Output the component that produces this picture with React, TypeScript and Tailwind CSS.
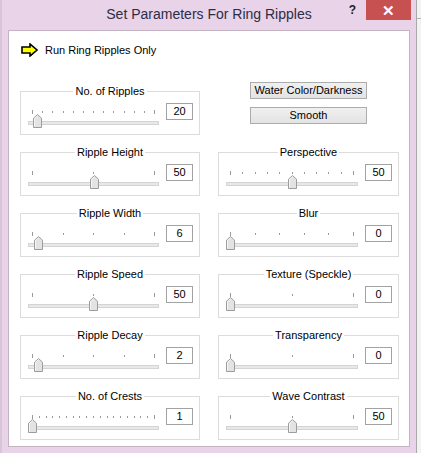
import React from 'react';

type SliderDef = {
  label: string;
  value: number;
  ticks: number;
  thumb: number; // thumb centre, px from the track's left end
};

const leftSliders: SliderDef[] = [
  { label: 'No. of Ripples', value: 20, ticks: 13, thumb: 9.5 },
  { label: 'Ripple Height', value: 50, ticks: 3, thumb: 66 },
  { label: 'Ripple Width', value: 6, ticks: 5, thumb: 10 },
  { label: 'Ripple Speed', value: 50, ticks: 3, thumb: 65.5 },
  { label: 'Ripple Decay', value: 2, ticks: 5, thumb: 10 },
  { label: 'No. of Crests', value: 1, ticks: 19, thumb: 4.5 },
];

const rightSliders: SliderDef[] = [
  { label: 'Perspective', value: 50, ticks: 11, thumb: 66 },
  { label: 'Blur', value: 0, ticks: 6, thumb: 4.5 },
  { label: 'Texture (Speckle)', value: 0, ticks: 3, thumb: 4.5 },
  { label: 'Transparency', value: 0, ticks: 3, thumb: 4.5 },
  { label: 'Wave Contrast', value: 50, ticks: 3, thumb: 66 },
];

const ArrowIcon = () => (
  <svg width="18" height="14" viewBox="0 0 18 14">
    <polygon points="2,5 10,5 10,2 16,7.5 10,13 10,10 2,10" fill="#333" />
    <polygon points="1,4 9,4 9,1 16,7 9,13 9,10 1,10" fill="#ffff00" stroke="#000" strokeWidth="1.6" strokeLinejoin="miter" />
  </svg>
);

const Thumb = () => (
  <svg width="9" height="14" viewBox="0 0 9 14">
    <polygon points="0.5,13.5 0.5,4.2 4.5,0.5 8.5,4.2 8.5,13.5" fill="#e3e3e3" stroke="#9c9c9c" strokeWidth="1" />
    <polyline points="1.5,12.5 1.5,4.6 4.5,1.8" fill="none" stroke="#f7f7f7" strokeWidth="1" />
  </svg>
);

const SliderGroup = ({ s }: { s: SliderDef }) => (
  <div className="flex h-[44px] flex-col border border-[#dcdcdc]">
    <div className="mx-auto -mt-[7px] bg-white px-[2px] text-[11px] leading-[13px] text-black">
      {s.label}
    </div>
    <div className="mt-[5px] flex items-start pl-[7px] pr-[6px]">
      <div className="relative h-[25px] flex-1">
        {Array.from({ length: s.ticks }, (_, i) => {
          const end = i === 0 || i === s.ticks - 1;
          return (
            <div
              key={i}
              className={`absolute w-px bg-[#9a9a9a] ${end ? 'top-[7px] h-[4px]' : 'top-[8px] h-[2px]'}`}
              style={{ left: `calc(4px + (100% - 9px) * ${i / (s.ticks - 1)})` }}
            />
          );
        })}
        <div className="mt-[18px] h-[4px] border border-[#d4d4d4] bg-[#e7e9e9]" />
        <div className="absolute top-[11px] flex" style={{ left: `${s.thumb - 4.5}px` }}>
          <Thumb />
        </div>
      </div>
      <div className="ml-[7px] flex h-[17px] w-[27px] items-center justify-center border border-[#a2a2a2] bg-white text-[11px] leading-none text-black">
        {s.value}
      </div>
    </div>
  </div>
);

const WinButton = ({ children }: { children: React.ReactNode }) => (
  <button className="flex h-[17px] w-[117px] items-center justify-center border border-[#acacac] bg-linear-to-b from-[#f0f0f0] to-[#e3e3e3] text-[11px] leading-none text-black">
    {children}
  </button>
);

export default function App() {
  return (
    <div className="flex h-[453px] w-[421px] overflow-hidden bg-[#f3f3f3] font-['Liberation_Sans',Arial,sans-serif]">
      <div className="flex w-[416px] shrink-0 flex-col border-l-2 border-[#d6c6d6] bg-[#e9d3e9]">
        {/* title bar */}
        <div className="relative h-[30px] shrink-0">
          <div className="pt-[6px] text-center text-[14px] leading-[17px] text-[#2d2d45]">
            Set Parameters For Ring Ripples
          </div>
          <div className="absolute right-[5px] top-0 flex items-start">
            <span className="mr-[10px] mt-[3px] text-[12px] font-bold leading-[14px] text-[#222]">?</span>
            <div className="flex h-[20px] w-[45px] items-center justify-center bg-[#c75050] text-[15px] font-bold leading-none text-white">
              ✕
            </div>
          </div>
        </div>

        {/* client area */}
        <div className="ml-[6px] mr-[6px] h-[417px] border border-[#c3b3c3] bg-white pl-[11px] pt-[12px]">
          <div className="flex h-[14px] items-center gap-[6px]">
            <div className="ml-[1px] flex">
              <ArrowIcon />
            </div>
            <span className="text-[11px] leading-none text-black">Run Ring Ripples Only</span>
          </div>

          <div className="mt-[34px] grid grid-cols-[180px_181px] gap-x-[18px] gap-y-[17px]">
            <SliderGroup s={leftSliders[0]} />
            <div className="-mt-[9px] flex flex-col items-center gap-[8px]">
              <WinButton>Water Color/Darkness</WinButton>
              <WinButton>Smooth</WinButton>
            </div>
            {leftSliders.slice(1).map((s, i) => (
              <React.Fragment key={s.label}>
                <SliderGroup s={s} />
                <SliderGroup s={rightSliders[i]} />
              </React.Fragment>
            ))}
          </div>
        </div>
      </div>
      <div className="flex-1 border-l border-[#a9a9a9] pt-[18px]">
        <div className="h-px bg-[#b5b5b5]" />
      </div>
    </div>
  );
}
